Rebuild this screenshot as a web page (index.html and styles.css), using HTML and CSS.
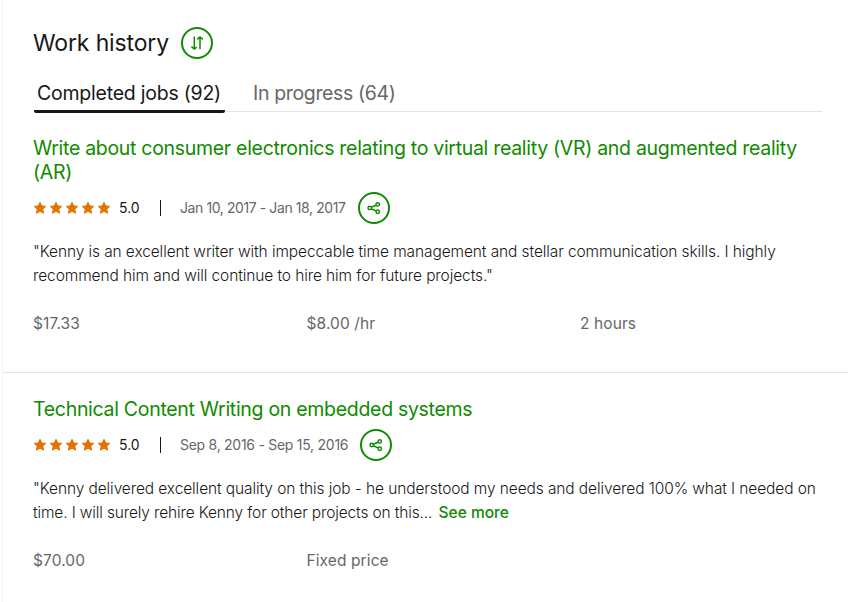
FILE: index.html
```html
<!DOCTYPE html>
<html lang="en">
<head>
    <meta charset="UTF-8">
    <title>Work history</title>
    <link rel="stylesheet" href="styles.css">
</head>
<body>

    <!-- Shared icons -->
    <svg class="icon-defs" width="0" height="0">
        <symbol id="star" viewBox="0 0 14 14">
            <path d="M7 1.3l1.7 3.6 4 .5-2.9 2.8.7 4L7 10.3l-3.5 1.9.7-4L1.3 5.4l4-.5z" />
        </symbol>
        <symbol id="share" viewBox="0 0 16 16">
            <path d="M5.2 7.3l4.9-2.1M5.2 8.7l4.9 2.2" />
            <circle cx="3.7" cy="8" r="1.7" />
            <circle cx="11.7" cy="4.4" r="1.7" />
            <circle cx="11.7" cy="11.7" r="1.7" />
        </symbol>
    </svg>

    <div class="work-history">
        <div class="header">
            <h2>Work history</h2>
            <button class="round-button" aria-label="Sort">
                <svg class="sort-icon" viewBox="0 0 16 16">
                    <path d="M5.3 1.6V14M2.4 11.6l2.9 2.4 2.5-2M11 14.2V2M8.2 4.4L11 2l2.8 2.4" />
                </svg>
            </button>
        </div>

        <div class="tabs">
            <a class="tab active">Completed jobs (92)</a>
            <a class="tab">In progress (64)</a>
        </div>

        <div class="job">
            <h3>Write about consumer electronics relating to virtual reality (VR) and augmented reality<br>(AR)</h3>
            <div class="meta">
                <div class="stars">
                    <svg><use href="#star" /></svg>
                    <svg><use href="#star" /></svg>
                    <svg><use href="#star" /></svg>
                    <svg><use href="#star" /></svg>
                    <svg><use href="#star" /></svg>
                </div>
                <span class="rating">5.0</span>
                <span class="divider"></span>
                <span class="dates dates-tight">Jan 10, 2017 - Jan 18, 2017</span>
                <button class="round-button" aria-label="Share">
                    <svg class="share-icon"><use href="#share" /></svg>
                </button>
            </div>
            <p class="review">"Kenny is an excellent writer with impeccable time management and stellar communication skills. I highly<br>recommend him and will continue to hire him for future projects."</p>
            <div class="details">
                <span>$17.33</span>
                <span>$8.00 /hr</span>
                <span>2 hours</span>
            </div>
        </div>

        <div class="job">
            <h3>Technical Content Writing on embedded systems</h3>
            <div class="meta">
                <div class="stars">
                    <svg><use href="#star" /></svg>
                    <svg><use href="#star" /></svg>
                    <svg><use href="#star" /></svg>
                    <svg><use href="#star" /></svg>
                    <svg><use href="#star" /></svg>
                </div>
                <span class="rating">5.0</span>
                <span class="divider"></span>
                <span class="dates">Sep 8, 2016 - Sep 15, 2016</span>
                <button class="round-button" aria-label="Share">
                    <svg class="share-icon"><use href="#share" /></svg>
                </button>
            </div>
            <p class="review">"Kenny delivered excellent quality on this job - he understood my needs and delivered 100% what I needed on<br><span class="last-line">time. I will surely rehire Kenny for other projects on this...</span> <a class="see-more">See more</a></p>
            <div class="details">
                <span>$70.00</span>
                <span>Fixed price</span>
            </div>
        </div>
    </div>

</body>
</html>
```
FILE: styles.css
```css
* {
    box-sizing: border-box;
}

body {
    margin: 0;
    background: #fff;
    color: #181818;
    font-family: Inter, "Liberation Sans", sans-serif;
}

.icon-defs {
    display: block;
}

.work-history {
    height: 602px;
    margin-left: 2px;
    padding-top: 27px;
    border-left: 1px solid #f4f4f4;
}

.header {
    display: flex;
    align-items: center;
    gap: 13px;
    height: 32px;
    padding-left: 30px;
}

h2 {
    width: 135px;
    margin: 0;
    font-size: 23px;
    font-weight: 400;
    letter-spacing: -0.15px;
    white-space: nowrap;
}

.round-button {
    display: flex;
    align-items: center;
    justify-content: center;
    width: 32px;
    height: 32px;
    padding: 0;
    border: 2px solid #108a00;
    border-radius: 50%;
    background: #fff;
    cursor: pointer;
}

.round-button svg {
    width: 16px;
    height: 16px;
    fill: none;
    stroke: #108a00;
    stroke-width: 1.5;
}

.tabs {
    display: flex;
    gap: 25px;
    height: 40px;
    margin: 13px 26px 0 31px;
    border-bottom: 1px solid #e4e4e4;
}

.tab {
    height: 41px;
    padding: 9px 3px 0;
    font-size: 19.5px;
    letter-spacing: -0.35px;
    line-height: 24px;
    color: #676767;
    white-space: nowrap;
}

.tab.active {
    width: 191px;
    border-bottom: 3px solid #181818;
    border-radius: 2px;
    letter-spacing: -0.23px;
    color: #181818;
}

.job {
    height: 261px;
    padding: 24px 0 0 30px;
    border-bottom: 1px solid #e4e4e4;
}

.job:last-child {
    height: 229px;
    border-bottom: none;
}

h3 {
    margin: 0 0 8px;
    font-size: 19.5px;
    font-weight: 400;
    letter-spacing: -0.3px;
    line-height: 24px;
    color: #108a00;
    white-space: nowrap;
}

.meta {
    display: flex;
    align-items: center;
    height: 32px;
    font-size: 14px;
}

.stars {
    display: flex;
    gap: 2px;
}

.stars svg {
    width: 14px;
    height: 14px;
    fill: #e27300;
    stroke: #e27300;
    stroke-linejoin: round;
}

.rating {
    width: 41px;
    margin-left: 8px;
    padding-bottom: 1px;
}

.divider {
    width: 1px;
    height: 16px;
    margin-right: 19px;
    background: #181818;
}

.dates {
    margin-right: 12px;
    padding-bottom: 1px;
    letter-spacing: -0.27px;
    color: #676767;
    white-space: nowrap;
}

.dates-tight {
    letter-spacing: -0.41px;
}

.review {
    margin: 16px 0 24px;
    font-size: 15.5px;
    font-weight: 300;
    letter-spacing: -0.1px;
    line-height: 24px;
    white-space: nowrap;
}

.last-line {
    letter-spacing: -0.14px;
}

.see-more {
    margin-left: 2px;
    font-weight: 500;
    letter-spacing: 0;
    color: #108a00;
}

.details {
    display: grid;
    grid-template-columns: repeat(3, 273.5px);
    font-size: 15.5px;
    letter-spacing: 0.1px;
    line-height: 24px;
    color: #676767;
}
```
